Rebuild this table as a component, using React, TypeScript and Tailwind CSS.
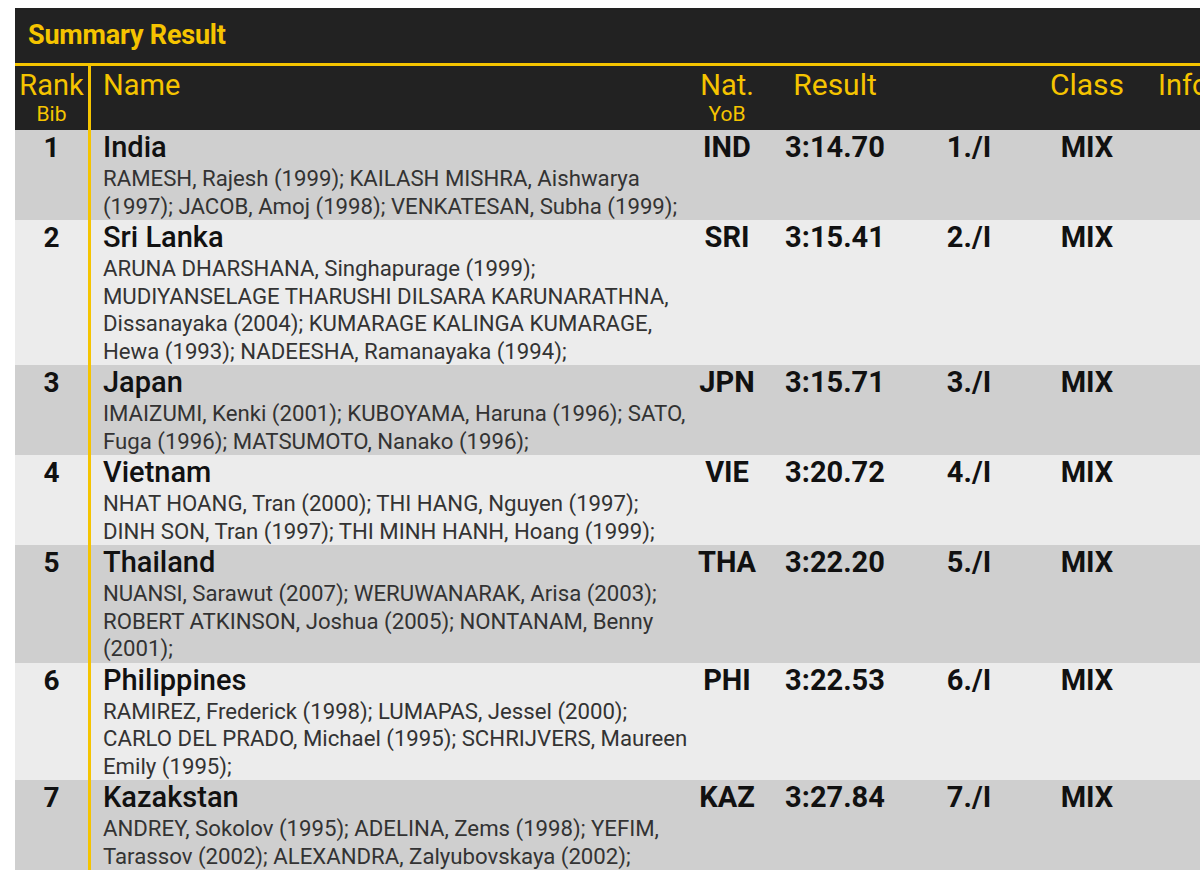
import React from "react";

type Team = {
  rank: number;
  country: string;
  members: string;
  nat: string;
  result: string;
  place: string;
  cls: string;
};

const teams: Team[] = [
  {
    rank: 1,
    country: "India",
    members:
      "RAMESH, Rajesh (1999); KAILASH MISHRA, Aishwarya (1997); JACOB, Amoj (1998); VENKATESAN, Subha (1999);",
    nat: "IND",
    result: "3:14.70",
    place: "1./I",
    cls: "MIX",
  },
  {
    rank: 2,
    country: "Sri Lanka",
    members:
      "ARUNA DHARSHANA, Singhapurage (1999); MUDIYANSELAGE THARUSHI DILSARA KARUNARATHNA, Dissanayaka (2004); KUMARAGE KALINGA KUMARAGE, Hewa (1993); NADEESHA, Ramanayaka (1994);",
    nat: "SRI",
    result: "3:15.41",
    place: "2./I",
    cls: "MIX",
  },
  {
    rank: 3,
    country: "Japan",
    members:
      "IMAIZUMI, Kenki (2001); KUBOYAMA, Haruna (1996); SATO, Fuga (1996); MATSUMOTO, Nanako (1996);",
    nat: "JPN",
    result: "3:15.71",
    place: "3./I",
    cls: "MIX",
  },
  {
    rank: 4,
    country: "Vietnam",
    members:
      "NHAT HOANG, Tran (2000); THI HANG, Nguyen (1997); DINH SON, Tran (1997); THI MINH HANH, Hoang (1999);",
    nat: "VIE",
    result: "3:20.72",
    place: "4./I",
    cls: "MIX",
  },
  {
    rank: 5,
    country: "Thailand",
    members:
      "NUANSI, Sarawut (2007); WERUWANARAK, Arisa (2003); ROBERT ATKINSON, Joshua (2005); NONTANAM, Benny (2001);",
    nat: "THA",
    result: "3:22.20",
    place: "5./I",
    cls: "MIX",
  },
  {
    rank: 6,
    country: "Philippines",
    members:
      "RAMIREZ, Frederick (1998); LUMAPAS, Jessel (2000); CARLO DEL PRADO, Michael (1995); SCHRIJVERS, Maureen Emily (1995);",
    nat: "PHI",
    result: "3:22.53",
    place: "6./I",
    cls: "MIX",
  },
  {
    rank: 7,
    country: "Kazakstan",
    members:
      "ANDREY, Sokolov (1995); ADELINA, Zems (1998); YEFIM, Tarassov (2002); ALEXANDRA, Zalyubovskaya (2002);",
    nat: "KAZ",
    result: "3:27.84",
    place: "7./I",
    cls: "MIX",
  },
];

const cols = "grid grid-cols-[73px_606px_66px_150px_118px_118px_120px]";

export default function App() {
  return (
    <div className="h-[872px] w-[1200px] overflow-hidden bg-white pl-[15px] pt-[8px] font-['Roboto',sans-serif]">
      <div className="w-[1260px] bg-[#222222]">
        {/* Title bar */}
        <div className="flex h-[58px] items-center border-b-[3px] border-[#f5c400] pl-[13px] text-[27px] font-bold tracking-[-0.2px] text-[#f5c400]">
          Summary Result
        </div>

        {/* Column headers */}
        <div className={`${cols} h-[64px] text-[#f5c400]`}>
          <div className="flex flex-col items-center pt-[2px]">
            <span className="text-[29px] leading-[34px]">Rank</span>
            <span className="text-[21px] leading-[24px]">Bib</span>
          </div>
          <div className="border-l-[3px] border-[#f5c400] pl-[12px] pt-[2px] text-[29px] leading-[34px]">
            Name
          </div>
          <div className="flex flex-col items-center pt-[2px]">
            <span className="text-[29px] leading-[34px]">Nat.</span>
            <span className="text-[21px] leading-[24px]">YoB</span>
          </div>
          <div className="pt-[2px] text-center text-[30px] leading-[34px]">Result</div>
          <div />
          <div className="pt-[2px] text-center text-[30px] leading-[34px]">Class</div>
          <div className="pl-[12px] pt-[2px] text-[29px] leading-[34px]">Info</div>
        </div>

        {/* Rows */}
        {teams.map((t, i) => (
          <div
            key={t.rank}
            className={`${cols} ${i % 2 === 0 ? "bg-[#cfcfcf]" : "bg-[#ececec]"}`}
          >
            <div className="text-center text-[28px] font-bold leading-[35px] text-[#111]">
              {t.rank}
            </div>
            <div className="border-l-[3px] border-[#f5c400] pl-[12px]">
              <div className="text-[29px] font-medium leading-[35px] text-[#111]">
                {t.country}
              </div>
              <div className="text-[22.2px] leading-[27.5px] text-[#333]">{t.members}</div>
            </div>
            <div className="text-center text-[29px] font-bold leading-[35px] text-[#111]">
              {t.nat}
            </div>
            <div className="text-center text-[29px] font-bold leading-[35px] text-[#111]">
              {t.result}
            </div>
            <div className="text-center text-[29px] font-bold leading-[35px] text-[#111]">
              {t.place}
            </div>
            <div className="text-center text-[29px] font-bold leading-[35px] text-[#111]">
              {t.cls}
            </div>
            <div />
          </div>
        ))}
      </div>
    </div>
  );
}
